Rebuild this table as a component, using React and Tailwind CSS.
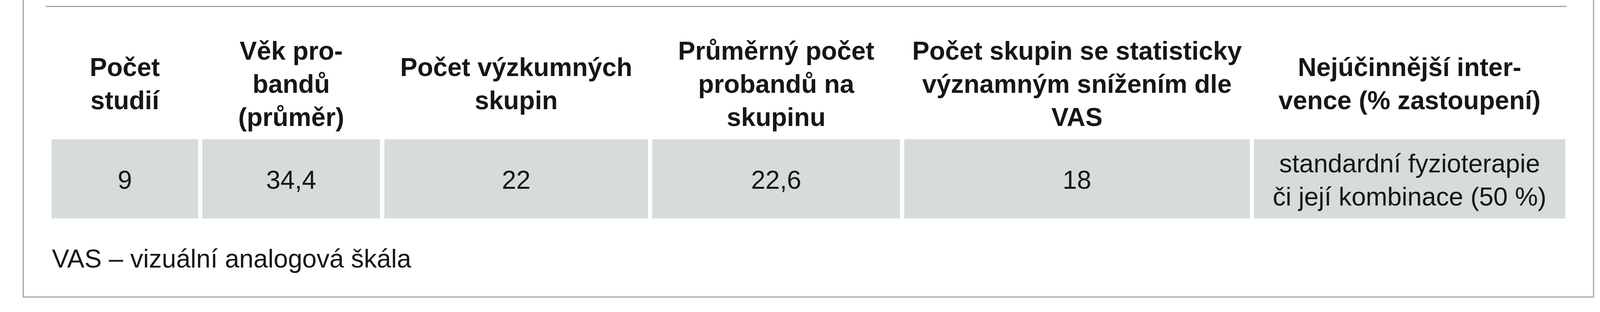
import React from "react";

const headers = [
  ["Počet", "studií"],
  ["Věk pro-", "bandů", "(průměr)"],
  ["Počet výzkumných", "skupin"],
  ["Průměrný počet", "probandů na", "skupinu"],
  ["Počet skupin se statisticky", "významným snížením dle", "VAS"],
  ["Nejúčinnější inter-", "vence (% zastoupení)"],
];

const values = [
  ["9"],
  ["34,4"],
  ["22"],
  ["22,6"],
  ["18"],
  ["standardní fyzioterapie", "či její kombinace (50 %)"],
];

const Lines = ({ lines }) =>
  lines.map((line, i) => (
    <span key={i} className="block whitespace-nowrap">
      {line}
    </span>
  ));

const App = () => {
  return (
    <div className="w-[4136px] h-[800px] bg-white text-[#161616] font-['Liberation_Sans',Arial,sans-serif] text-[66px] leading-[85px]">
      <div className="ml-[58px] w-[4023px] h-[763px] border-x-[3px] border-b-[3px] border-[#a4a4a4]">
        {/* top rule */}
        <div className="pt-[15px] pl-[56px]">
          <div className="w-[3894px] h-[3px] bg-[#a4a4a4]" />
        </div>

        {/* table */}
        <div className="ml-[71px] mt-[48px] w-[3876px]">
          <div className="grid grid-cols-[375px_455px_675px_634px_884px_797px] gap-x-[11px] h-[291px] pt-[7px] items-center font-bold text-center">
            {headers.map((h, i) => (
              <div key={i}>
                <Lines lines={h} />
              </div>
            ))}
          </div>
          <div className="grid grid-cols-[375px_455px_675px_634px_884px_797px] gap-x-[11px] h-[203px]">
            {values.map((v, i) => (
              <div
                key={i}
                className="bg-[#d5dcd9] pt-[6px] flex flex-col items-center justify-center text-center"
              >
                <Lines lines={v} />
              </div>
            ))}
          </div>
        </div>

        {/* footnote */}
        <p className="ml-[72px] mt-[61px]">VAS – vizuální analogová škála</p>
      </div>
    </div>
  );
};

export default App;
